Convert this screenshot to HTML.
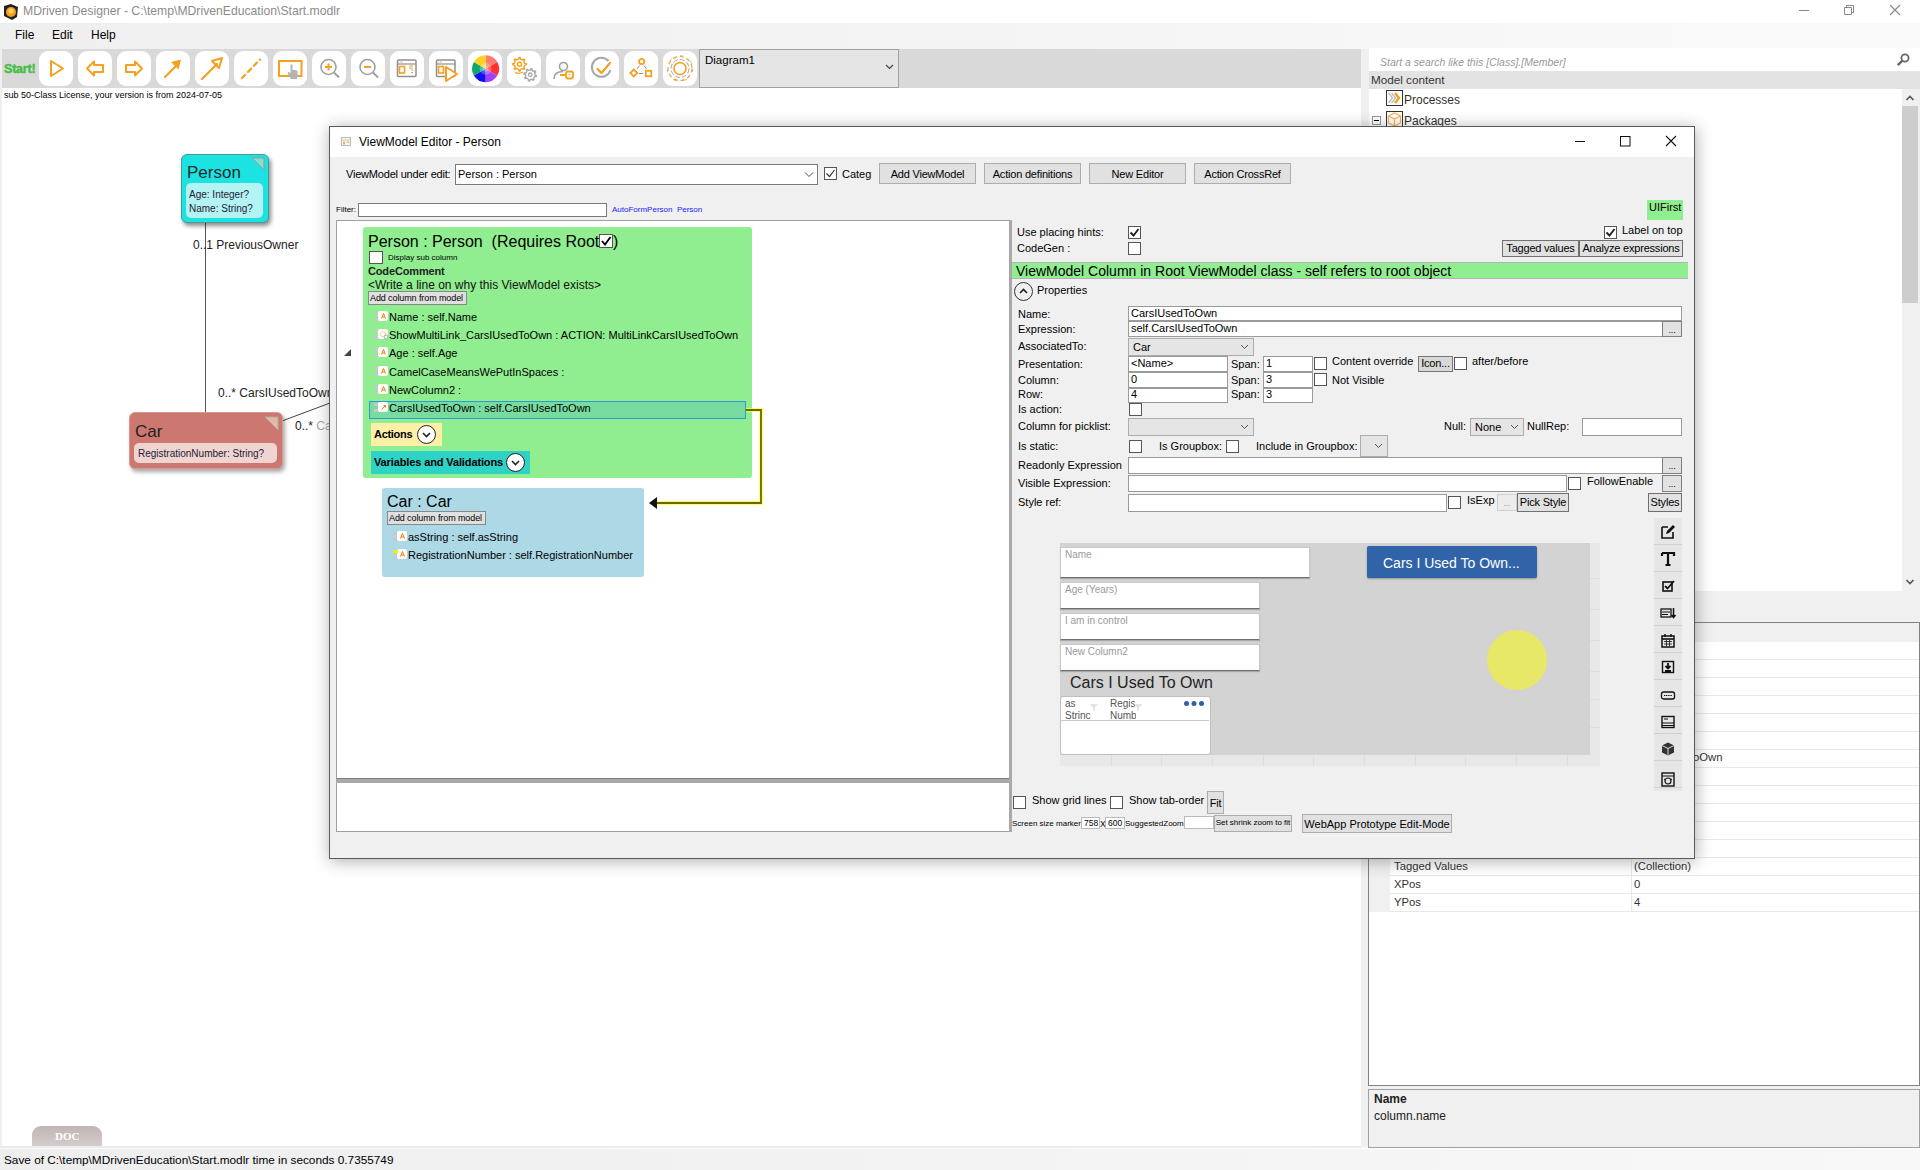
<!DOCTYPE html>
<html><head><meta charset="utf-8">
<style>
*{box-sizing:border-box;margin:0;padding:0}
html,body{width:1920px;height:1170px;overflow:hidden;background:#fff;font-family:"Liberation Sans",sans-serif;color:#000}
.a{position:absolute}
.t{position:absolute;white-space:pre;line-height:1}
.btn{position:absolute;background:#e1e1e1;border:1px solid #adadad;font-size:11px;text-align:center;white-space:pre;line-height:18px;letter-spacing:-.2px;padding-top:1px}
.cb{position:absolute;width:13px;height:13px;border:1px solid #555;background:#fff}
.inp{position:absolute;background:#fff;border:1px solid #9a9a9a;font-size:11px;white-space:pre;line-height:13px;padding-left:2px}
.tb{position:absolute;top:51px;width:34px;height:35px;background:#fff;border-radius:9px}
.tb svg{position:absolute;left:0;top:0}
.s11{font-size:11px;margin-top:1px}
.ico{position:absolute;width:10px;height:10px;background:#fff;border-radius:2px}
.grip{position:absolute;width:5px;height:3px;background:#c8c8c8;border-radius:1px}
</style></head><body>
<div class="a" style="left:0;top:1146px;width:1920px;height:24px;background:linear-gradient(to right,#eeeeee,#f3f3f3 50%,#f8f8f8)"></div>
<div class="a" style="left:0;top:1146px;width:1361px;height:2px;background:#ececec"></div><div class="a" style="left:0;top:1148px;width:1920px;height:1px;background:#fbfbfb"></div>
<!-- title bar -->
<div class="a" style="left:0;top:0;width:1920px;height:23px;background:#fff"></div>
<svg class="a" style="left:2px;top:2px" width="16" height="18" viewBox="0 0 16 18"><path d="M2 4 L9 2 L16 5 L15 15 L10 18 L2 14 Z" fill="#222"/><circle cx="9" cy="10" r="5" fill="#f7a11a"/><circle cx="9" cy="9" r="2.5" fill="#ffd36a"/></svg>
<div class="t" style="left:23px;top:5px;font-size:12.2px;color:#8c8c8c">MDriven Designer - C:\temp\MDrivenEducation\Start.modlr</div>
<svg class="a" style="left:1795px;top:2px" width="120" height="16" viewBox="0 0 120 16"><path d="M4 8.5 H14" stroke="#888" stroke-width="1"/><path d="M49.5 5.5 H56.5 V12.5 H49.5 Z M51.5 5.5 V3.5 H58.5 V10.5 H56.5" stroke="#888" fill="none" stroke-width="1"/><path d="M95 3 L105 13 M105 3 L95 13" stroke="#888" stroke-width="1.1"/></svg>
<!-- menu -->
<div class="a" style="left:0;top:23px;width:1920px;height:26px;background:linear-gradient(to right,#efefef,#f3f3f3 40%,#fafafa)"></div>
<div class="t" style="left:15px;top:29px;font-size:12px">File</div>
<div class="t" style="left:52px;top:29px;font-size:12px">Edit</div>
<div class="t" style="left:91px;top:29px;font-size:12px">Help</div>
<!-- toolbar -->
<div class="a" style="left:0;top:49px;width:2px;height:1097px;background:#f0f0f0"></div><div class="a" style="left:2px;top:49px;width:1359px;height:39px;background:#d9d9d9"></div>
<div class="t" style="left:4px;top:63px;font-size:12.5px;font-weight:700;color:#34c834;letter-spacing:-0.2px;-webkit-text-stroke:.4px #52b052">Start!</div>
<div class="tb" style="left:39px"><svg width="34" height="35"><path d="M12 10 L24 17.5 L12 25 Z" fill="none" stroke="#f5a01e" stroke-width="2" stroke-linejoin="round"/></svg></div>
<div class="tb" style="left:78px"><svg width="34" height="35"><path d="M9 17.5 L16 10.5 V14 H25 V21 H16 V24.5 Z" fill="none" stroke="#f5a01e" stroke-width="2" stroke-linejoin="round"/></svg></div>
<div class="tb" style="left:117px"><svg width="34" height="35"><path d="M25 17.5 L18 10.5 V14 H9 V21 H18 V24.5 Z" fill="none" stroke="#f5a01e" stroke-width="2" stroke-linejoin="round"/></svg></div>
<div class="tb" style="left:156px"><svg width="34" height="35"><path d="M9 26 L23 12" stroke="#f5a01e" stroke-width="2.2" stroke-linecap="round"/><path d="M25 8.5 L15 11 L22.5 18.5 Z" fill="#f5a01e"/></svg></div>
<div class="tb" style="left:195px"><svg width="34" height="35"><path d="M7 28 L22 13" stroke="#f5a01e" stroke-width="2.2" stroke-linecap="round"/><path d="M27 7 L17 10 L24 17 Z" fill="none" stroke="#f5a01e" stroke-width="2" stroke-linejoin="round"/></svg></div>
<div class="tb" style="left:234px"><svg width="34" height="35"><path d="M8 27 L26 8.5" stroke="#f5a01e" stroke-width="2.2" stroke-linecap="round" stroke-dasharray="4.5 4"/></svg></div>
<div class="tb" style="left:273px"><svg width="34" height="35"><path d="M6 10 H28.5 V25 H6 Z" fill="none" stroke="#f5a01e" stroke-width="2"/><path d="M17.5 14 V22 L15.5 21 Q14 21 15 23 L18 28 H24 Q25 25 24.5 20 Q24 19 22 19 H19.5 V14 Q18.5 12.5 17.5 14 Z" fill="#b4b4b4"/></svg></div>
<div class="tb" style="left:312px"><svg width="34" height="35"><circle cx="16.5" cy="16" r="7.5" fill="none" stroke="#a0a0a0" stroke-width="1.6"/><path d="M22 21.5 L27 26.5" stroke="#a0a0a0" stroke-width="2"/><path d="M13 16 H20 M16.5 12.5 V19.5" stroke="#f5a01e" stroke-width="2"/></svg></div>
<div class="tb" style="left:351px"><svg width="34" height="35"><circle cx="16.5" cy="16" r="7.5" fill="none" stroke="#a0a0a0" stroke-width="1.6"/><path d="M22 21.5 L27 26.5" stroke="#a0a0a0" stroke-width="2"/><path d="M13 16 H20" stroke="#f5a01e" stroke-width="2"/></svg></div>
<div class="tb" style="left:390px"><svg width="34" height="35"><rect x="7.5" y="9" width="18.5" height="16.5" rx="1" fill="none" stroke="#909090" stroke-width="1.5"/><path d="M7.5 13 H26" stroke="#909090" stroke-width="1.2"/><path d="M9.5 11 H13" stroke="#f5a01e" stroke-width="1.2" stroke-dasharray="1 .6"/><rect x="9.5" y="15.5" width="5" height="6.5" fill="none" stroke="#f5a01e" stroke-width="1.6"/><path d="M19 15 H23 M19 17 H23 M21 19 H23 M21 21.5 H23" stroke="#f5a01e" stroke-width="1"/></svg></div>
<div class="tb" style="left:429px"><svg width="34" height="35"><rect x="7.5" y="9" width="18.5" height="16.5" rx="1" fill="none" stroke="#909090" stroke-width="1.5"/><path d="M7.5 13 H26" stroke="#909090" stroke-width="1.2"/><path d="M9.5 11 H13" stroke="#f5a01e" stroke-width="1.2" stroke-dasharray="1 .6"/><rect x="9.5" y="15.5" width="5" height="6.5" fill="none" stroke="#f5a01e" stroke-width="1.6"/><path d="M17 16 L28 23 L17 30 Z" fill="#fff" stroke="#f5a01e" stroke-width="2" stroke-linejoin="round"/></svg></div>
<div class="tb" style="left:468px"><svg width="34" height="35">
<g transform="translate(17.6,17.7)">
<path d="M0 0 L0 -13.5 A13.5 13.5 0 0 1 11.7 -6.75 Z" fill="#ff7b6b"/>
<path d="M0 0 L11.7 -6.75 A13.5 13.5 0 0 1 11.7 6.75 Z" fill="#ff3030"/>
<path d="M0 0 L11.7 6.75 A13.5 13.5 0 0 1 0 13.5 Z" fill="#a040ff"/>
<path d="M0 0 L0 13.5 A13.5 13.5 0 0 1 -11.7 6.75 Z" fill="#1010f0"/>
<path d="M0 0 L-11.7 6.75 A13.5 13.5 0 0 1 -11.7 -6.75 Z" fill="#10a870"/>
<path d="M0 0 L-11.7 -6.75 A13.5 13.5 0 0 1 0 -13.5 Z" fill="#ffd020"/>
<circle r="6" fill="#fff" fill-opacity=".25"/><circle r="3" fill="#fff" fill-opacity=".25"/>
</g></svg></div>
<div class="tb" style="left:507px"><svg width="34" height="35"><path d="M17.62 12.29 L19.27 12.53 L19.27 13.87 L17.62 14.11 L16.77 16.17 L17.76 17.51 L16.81 18.46 L15.47 17.47 L13.41 18.32 L13.17 19.97 L11.83 19.97 L11.59 18.32 L9.53 17.47 L8.19 18.46 L7.24 17.51 L8.23 16.17 L7.38 14.11 L5.73 13.87 L5.73 12.53 L7.38 12.29 L8.23 10.23 L7.24 8.89 L8.19 7.94 L9.53 8.93 L11.59 8.08 L11.83 6.43 L13.17 6.43 L13.41 8.08 L15.47 8.93 L16.81 7.94 L17.76 8.89 L16.77 10.23 Z" fill="none" stroke="#f5a01e" stroke-width="1.4" stroke-linejoin="round"/><circle cx="12.5" cy="13.2" r="2" fill="none" stroke="#f5a01e" stroke-width="1.4"/><path d="M8 21.5 Q12 23.5 16 21" stroke="#f5a01e" stroke-width="1.2" fill="none"/><path d="M28.00 23.91 L29.37 24.43 L29.13 25.62 L27.66 25.57 L26.51 27.27 L27.12 28.61 L26.10 29.28 L25.11 28.20 L23.09 28.60 L22.57 29.97 L21.38 29.73 L21.43 28.26 L19.73 27.11 L18.39 27.72 L17.72 26.70 L18.80 25.71 L18.40 23.69 L17.03 23.17 L17.27 21.98 L18.74 22.03 L19.89 20.33 L19.28 18.99 L20.30 18.32 L21.29 19.40 L23.31 19.00 L23.83 17.63 L25.02 17.87 L24.97 19.34 L26.67 20.49 L28.01 19.88 L28.68 20.90 L27.60 21.89 Z" fill="#fff" stroke="#a8a8a8" stroke-width="1.4" stroke-linejoin="round"/><circle cx="23.2" cy="23.8" r="1.8" fill="none" stroke="#a8a8a8" stroke-width="1.3"/></svg></div>
<div class="tb" style="left:546px"><svg width="34" height="35"><circle cx="17.5" cy="15.5" r="4" fill="none" stroke="#a0a0a0" stroke-width="1.6"/><path d="M8 28 Q8 20.5 17 20.5" fill="none" stroke="#a0a0a0" stroke-width="1.6"/><path d="M14 24 H20" stroke="#f5a01e" stroke-width="2"/><rect x="20" y="20.5" width="7" height="7" rx="2" fill="none" stroke="#f5a01e" stroke-width="1.8"/><circle cx="23.5" cy="23.5" r=".8" fill="#f5a01e"/></svg></div>
<div class="tb" style="left:585px"><svg width="34" height="35"><path d="M23.5 10 A9.5 9.5 0 1 0 25.5 19" fill="none" stroke="#a8a8a8" stroke-width="2"/><path d="M12.5 18 L16.5 22 L25 12" fill="none" stroke="#f5a01e" stroke-width="2.2" stroke-linecap="round" stroke-linejoin="round"/></svg></div>
<div class="tb" style="left:624px"><svg width="34" height="35"><circle cx="17.7" cy="10.5" r="2.6" fill="none" stroke="#f5a01e" stroke-width="1.8"/><path d="M9.8 18.5 L13.3 22 L9.8 25.5 L6.3 22 Z" fill="none" stroke="#f5a01e" stroke-width="1.8"/><rect x="21.8" y="19.8" width="5.5" height="5.5" fill="none" stroke="#f5a01e" stroke-width="1.8"/><path d="M15.5 14.5 L13 18 M20 14.5 L22.5 18 M15 22.5 H19" stroke="#909090" stroke-width="1"/></svg></div>
<div class="tb" style="left:663px"><svg width="34" height="35"><circle cx="17" cy="17.5" r="6" fill="none" stroke="#f5a01e" stroke-width="1.6"/><circle cx="17" cy="17.5" r="9" fill="none" stroke="#a8a8a8" stroke-width="1" stroke-dasharray="5 2"/><circle cx="17" cy="17.5" r="12" fill="none" stroke="#f5a01e" stroke-width="1.2" stroke-dasharray="4 3"/><circle cx="17" cy="17.5" r="12.8" fill="none" stroke="#a8a8a8" stroke-width=".8" stroke-dasharray="3 9"/></svg></div>
<div class="a" style="left:699px;top:49px;width:200px;height:39px;background:#e5e5e5;border:1px solid #a0a0a0"></div>
<div class="t" style="left:705px;top:55px;font-size:11.5px">Diagram1</div>
<svg class="a" style="left:885px;top:64px" width="9" height="6"><path d="M1 1 L4.5 4.5 L8 1" fill="none" stroke="#444" stroke-width="1.2"/></svg>
<div class="t" style="left:4px;top:91px;font-size:9px">sub 50-Class License, your version is from 2024-07-05</div>
<!-- right panel -->
<div class="a" style="left:1361px;top:49px;width:559px;height:1097px;background:#f0f0f0"></div>
<div class="a" style="left:1369px;top:48px;width:551px;height:23px;background:#fff"></div>
<div class="t" style="left:1380px;top:57px;font-size:10.5px;font-style:italic;color:#999">Start a search like this [Class].[Member]</div>
<svg class="a" style="left:1896px;top:52px" width="16" height="16"><circle cx="9" cy="6" r="3.6" fill="none" stroke="#666" stroke-width="1.8"/><path d="M6.5 8.5 L1.8 13.2" stroke="#666" stroke-width="2.4"/></svg>
<div class="a" style="left:1369px;top:71px;width:551px;height:18px;background:#e3e3e3"></div>
<div class="t" style="left:1371px;top:74px;font-size:11.7px;color:#333">Model content</div>
<div class="a" style="left:1369px;top:89px;width:533px;height:502px;background:#fff"></div>
<div class="a" style="left:1902px;top:89px;width:16px;height:502px;background:#f0f0f0"></div>
<div class="a" style="left:1902px;top:106px;width:16px;height:197px;background:#cdcdcd"></div>
<svg class="a" style="left:1902px;top:92px" width="16" height="12"><path d="M4.5 8 L8 4.5 L11.5 8" fill="none" stroke="#555" stroke-width="1.6"/></svg>
<svg class="a" style="left:1902px;top:576px" width="16" height="12"><path d="M4.5 4 L8 7.5 L11.5 4" fill="none" stroke="#555" stroke-width="1.6"/></svg>
<!-- tree items -->
<svg class="a" style="left:1386px;top:90px" width="17" height="17"><rect x=".5" y=".5" width="16" height="15" fill="#fff" stroke="#333"/><path d="M2.5 3 L6.5 8 L2.5 13 M5.5 3 L9.5 8 L5.5 13" fill="none" stroke="#bbb" stroke-width="1.3"/><path d="M9 3 L13 8 L9 13" fill="none" stroke="#f5a01e" stroke-width="2.4"/></svg>
<div class="t" style="left:1404px;top:94px;font-size:12px;color:#333">Processes</div>
<div class="a" style="left:1372px;top:116px;width:9px;height:9px;border:1px solid #999;background:#fff"></div>
<div class="a" style="left:1374px;top:120px;width:5px;height:1px;background:#000"></div>
<svg class="a" style="left:1386px;top:111px" width="17" height="16"><rect x=".5" y=".5" width="16" height="16" fill="#fff" stroke="#333"/><path d="M2.5 5 L8.5 2 L14.5 5 V12 L8.5 15 L2.5 12 Z M2.5 5 L8.5 8 L14.5 5 M8.5 8 V15" fill="none" stroke="#f5b050" stroke-width="1.2"/></svg>
<div class="t" style="left:1404px;top:115px;font-size:12px;color:#333">Packages</div>
<!-- property grid -->
<div class="a" style="left:1368px;top:622px;width:552px;height:464px;background:#fff;border:1px solid #828282"></div>
<div class="a" style="left:1369px;top:623px;width:550px;height:19px;background:#f0f0f0"></div>
<div class="a" style="left:1369px;top:642px;width:21px;height:270px;background:#f0f0f0"></div>
<div class="a" style="left:1390px;top:659px;width:529px;height:1px;background:#e8e8e8"></div>
<div class="a" style="left:1390px;top:677px;width:529px;height:1px;background:#e8e8e8"></div>
<div class="a" style="left:1390px;top:695px;width:529px;height:1px;background:#e8e8e8"></div>
<div class="a" style="left:1390px;top:713px;width:529px;height:1px;background:#e8e8e8"></div>
<div class="a" style="left:1390px;top:731px;width:529px;height:1px;background:#e8e8e8"></div>
<div class="a" style="left:1390px;top:749px;width:529px;height:1px;background:#e8e8e8"></div>
<div class="a" style="left:1390px;top:767px;width:529px;height:1px;background:#e8e8e8"></div>
<div class="a" style="left:1390px;top:785px;width:529px;height:1px;background:#e8e8e8"></div>
<div class="a" style="left:1390px;top:803px;width:529px;height:1px;background:#e8e8e8"></div>
<div class="a" style="left:1390px;top:821px;width:529px;height:1px;background:#e8e8e8"></div>
<div class="a" style="left:1390px;top:839px;width:529px;height:1px;background:#e8e8e8"></div>
<div class="a" style="left:1390px;top:857px;width:529px;height:1px;background:#e8e8e8"></div>
<div class="a" style="left:1390px;top:875px;width:529px;height:1px;background:#e8e8e8"></div>
<div class="a" style="left:1390px;top:893px;width:529px;height:1px;background:#e8e8e8"></div>
<div class="a" style="left:1390px;top:911px;width:529px;height:1px;background:#e8e8e8"></div>
<div class="a" style="left:1631px;top:642px;width:1px;height:269px;background:#e8e8e8"></div>
<div class="t" style="left:1634px;top:752px;font-size:11.3px;color:#333">CarsIUsedToOwn</div>
<div class="t" style="left:1394px;top:861px;font-size:11.3px;color:#333">Tagged Values</div>
<div class="t" style="left:1634px;top:861px;font-size:11.3px;color:#333">(Collection)</div>
<div class="t" style="left:1394px;top:879px;font-size:11.3px;color:#333">XPos</div>
<div class="t" style="left:1634px;top:879px;font-size:11.3px;color:#333">0</div>
<div class="t" style="left:1394px;top:897px;font-size:11.3px;color:#333">YPos</div>
<div class="t" style="left:1634px;top:897px;font-size:11.3px;color:#333">4</div>
<div class="a" style="left:1368px;top:1089px;width:552px;height:59px;background:#f0f0f0;border:1px solid #a0a0a0"></div>
<div class="t" style="left:1374px;top:1093px;font-size:12px;font-weight:700;color:#222">Name</div>
<div class="t" style="left:1374px;top:1110px;font-size:12px;color:#222">column.name</div>
<!-- status -->

<div class="t" style="left:4px;top:1155px;font-size:11.8px">Save of C:\temp\MDrivenEducation\Start.modlr time in seconds 0.7355749</div>
<div class="a" style="left:32px;top:1126px;width:70px;height:20px;border-radius:9px 9px 0 0;background:linear-gradient(#c2b5b5,#d4cccc)"></div>
<div class="t" style="left:55px;top:1131px;font-size:11px;font-weight:700;color:#fff;font-family:'Liberation Serif',serif">DOC</div>
<!-- diagram -->
<div class="a" style="left:205px;top:222px;width:1px;height:190px;background:#555"></div>
<svg class="a" style="left:280px;top:400px" width="52" height="25"><path d="M2 21 L50 3" stroke="#444" stroke-width="1"/></svg>
<div class="t" style="left:193px;top:239px;font-size:12px;color:#222">0..1 PreviousOwner</div>
<div class="t" style="left:218px;top:387px;font-size:12px;color:#222">0..* CarsIUsedToOwn</div>
<div class="t" style="left:295px;top:420px;font-size:12px;color:#222">0..* <span style="color:#aaa">Ca</span></div>
<div class="a" style="left:181px;top:154px;width:88px;height:69px;background:#1de2e2;border:1.5px solid #4a9a9a;border-radius:6px;box-shadow:2px 3px 4px rgba(0,0,0,.45)"></div>
<svg class="a" style="left:251px;top:157px" width="14" height="14"><path d="M1 1 H13 V13 Z" fill="#7fe0d0" stroke="#999" stroke-width="1"/></svg>
<div class="t" style="left:187px;top:164px;font-size:17px;color:#1a2a2a">Person</div>
<div class="a" style="left:186px;top:183px;width:77px;height:35px;background:#b4f3f3;border-radius:5px"></div>
<div class="t" style="left:189px;top:190px;font-size:10px;color:#223">Age: Integer?</div>
<div class="t" style="left:189px;top:204px;font-size:10px;color:#223">Name: String?</div>
<div class="a" style="left:129px;top:412px;width:154px;height:57px;background:#cc7870;border:1px solid #d89890;border-radius:6px;box-shadow:2px 3px 4px rgba(0,0,0,.35)"></div>
<svg class="a" style="left:264px;top:416px" width="15" height="15"><path d="M1 1 H14 V14 Z" fill="#e8b8a0" stroke="#aaa" stroke-width="1"/></svg>
<div class="t" style="left:135px;top:423px;font-size:17px;color:#222">Car</div>
<div class="a" style="left:134px;top:443px;width:143px;height:20px;background:#f0d4d2;border-radius:5px"></div>
<div class="t" style="left:138px;top:449px;font-size:10px;color:#223">RegistrationNumber: String?</div>
<!-- dialog -->
<div class="a" style="left:329px;top:126px;width:1366px;height:733px;background:#f0f0f0;border:1px solid #5a5a5a;box-shadow:1px 2px 16px rgba(0,0,0,0.32)"></div>
<div class="a" style="left:330px;top:127px;width:1364px;height:30px;background:#fff"></div>
<svg class="a" style="left:341px;top:137px" width="10" height="9"><rect x=".5" y=".5" width="9" height="8" fill="#f4f4f4" stroke="#bbb"/><path d="M1 3 H9" stroke="#ccc"/><rect x="2" y="4.5" width="2" height="3" fill="#f5b050"/><rect x="5.5" y="4.5" width="3" height="1.5" fill="#f5c070"/></svg>
<div class="t" style="left:359px;top:136px;font-size:12px">ViewModel Editor - Person</div>
<svg class="a" style="left:1570px;top:132px" width="112" height="18"><path d="M5 9.5 H15" stroke="#111" stroke-width="1"/><rect x="50.5" y="4.5" width="9.5" height="9.5" fill="none" stroke="#111" stroke-width="1"/><path d="M96 4 L106 14 M106 4 L96 14" stroke="#111" stroke-width="1.1"/></svg>
<div class="t s11" style="left:346px;top:168px;letter-spacing:-.2px">ViewModel under edit:</div>
<div class="a" style="left:455px;top:164px;width:363px;height:21px;background:#fff;border:1px solid #7a7a7a"></div>
<div class="t s11" style="left:458px;top:168px">Person : Person</div>
<svg class="a" style="left:804px;top:171px" width="10" height="7"><path d="M1 1.5 L5 5.5 L9 1.5" fill="none" stroke="#444" stroke-width="1"/></svg>
<div class="cb" style="left:824px;top:167px"></div>
<svg class="a" style="left:824px;top:167px" width="13" height="13"><path d="M2.5 6.5 L5.5 9.5 L10.5 3" fill="none" stroke="#333" stroke-width="1.2"/></svg>
<div class="t s11" style="left:842px;top:168px">Categ</div>
<div class="btn" style="left:879px;top:163px;width:97px;height:21px;line-height:19px">Add ViewModel</div>
<div class="btn" style="left:984px;top:163px;width:97px;height:21px;line-height:19px">Action definitions</div>
<div class="btn" style="left:1089px;top:163px;width:97px;height:21px;line-height:19px">New Editor</div>
<div class="btn" style="left:1194px;top:163px;width:97px;height:21px;line-height:19px">Action CrossRef</div>
<div class="t" style="left:336px;top:206px;font-size:8px">Filter:</div>
<div class="a" style="left:358px;top:203px;width:249px;height:14px;background:#fff;border:1px solid #7a7a7a"></div>
<div class="t" style="left:612px;top:206px;font-size:8px;color:#1a1aff">AutoFormPerson  Person</div>
<div class="a" style="left:1647px;top:200px;width:36px;height:20px;background:#90ee90"></div>
<div class="t s11" style="left:1649px;top:201px">UIFirst</div>
<!-- tree panel -->
<div class="a" style="left:336px;top:220px;width:673px;height:559px;background:#fff;border-left:1px solid #a0a0a0;border-top:1px solid #a0a0a0;border-bottom:1px solid #7a8088"></div>
<div class="a" style="left:336px;top:779px;width:673px;height:4px;background:#a9a9a9"></div>
<div class="a" style="left:1009px;top:220px;width:3px;height:612px;background:#a9a9a9"></div>
<div class="a" style="left:336px;top:783px;width:673px;height:49px;background:#fff;border-left:1px solid #a0a0a0;border-bottom:1px solid #a0a0a0"></div>
<svg class="a" style="left:343px;top:348px" width="9" height="9"><path d="M8 1 V8 H1 Z" fill="#444"/></svg>
<!-- green VM box -->
<div class="a" style="left:363px;top:227px;width:389px;height:251px;background:#90ee90;border-radius:3px"></div>
<div class="t" style="left:368px;top:234px;font-size:16px">Person : Person  (Requires Root</div>
<div class="a" style="left:599px;top:234px;width:14px;height:14px;background:#fff;border:1px solid #555"></div>
<svg class="a" style="left:599px;top:234px" width="14" height="14"><path d="M3 7 L6 10.5 L11.5 3" fill="none" stroke="#000" stroke-width="1.8"/></svg>
<div class="t" style="left:613px;top:234px;font-size:16px">)</div>
<div class="a" style="left:369px;top:251px;width:14px;height:13px;background:#fff;border:1px solid #555"></div>
<div class="t" style="left:388px;top:254px;font-size:8px">Display sub column</div>
<div class="t" style="left:368px;top:266px;font-size:11px;font-weight:700;color:#222;letter-spacing:-.15px">CodeComment</div>
<div class="t" style="left:368px;top:279px;font-size:12px;color:#111">&lt;Write a line on why this ViewModel exists&gt;</div>
<div class="a" style="left:368px;top:291px;width:99px;height:14px;background:#e0e0e0;border:1px solid #888"></div>
<div class="t" style="left:370px;top:294px;font-size:9px;letter-spacing:-.1px">Add column from model</div>
<div class="a" style="left:369px;top:401px;width:377px;height:18px;background:#78dca0;border:1px solid #2a9ad8"></div>
<div class="grip" style="left:374px;top:312px"></div><div class="grip" style="left:374px;top:318px"></div>
<div class="ico" style="left:378px;top:311px"></div>
<svg class="a" style="left:379px;top:312px" width="9" height="9"><path d="M2.5 6.5 L4.5 1.5 L6.5 6.5 M3.2 5 H5.8" fill="none" stroke="#f08000" stroke-width="1"/></svg>
<div class="t s11" style="left:389px;top:311px">Name : self.Name</div>
<div class="grip" style="left:374px;top:330px"></div><div class="grip" style="left:374px;top:336px"></div>
<div class="ico" style="left:378px;top:329px"></div>
<svg class="a" style="left:379px;top:330px" width="10" height="10"><circle cx="4" cy="4" r="2.5" fill="none" stroke="#f5a040" stroke-width="1" stroke-dasharray="1 .8"/><circle cx="7" cy="7" r="2" fill="none" stroke="#aaa" stroke-width="1"/></svg>
<div class="t s11" style="left:389px;top:329px">ShowMultiLink_CarsIUsedToOwn : ACTION: MultiLinkCarsIUsedToOwn</div>
<div class="grip" style="left:374px;top:348px"></div><div class="grip" style="left:374px;top:354px"></div>
<div class="ico" style="left:378px;top:347px"></div>
<svg class="a" style="left:379px;top:348px" width="9" height="9"><path d="M2.5 6.5 L4.5 1.5 L6.5 6.5 M3.2 5 H5.8" fill="none" stroke="#f08000" stroke-width="1"/></svg>
<div class="t s11" style="left:389px;top:347px">Age : self.Age</div>
<div class="grip" style="left:374px;top:367px"></div><div class="grip" style="left:374px;top:373px"></div>
<div class="ico" style="left:378px;top:366px"></div>
<svg class="a" style="left:379px;top:367px" width="9" height="9"><path d="M2.5 6.5 L4.5 1.5 L6.5 6.5 M3.2 5 H5.8" fill="none" stroke="#f08000" stroke-width="1"/></svg>
<div class="t s11" style="left:389px;top:366px">CamelCaseMeansWePutInSpaces :</div>
<div class="grip" style="left:374px;top:385px"></div><div class="grip" style="left:374px;top:391px"></div>
<div class="ico" style="left:378px;top:384px"></div>
<svg class="a" style="left:379px;top:385px" width="9" height="9"><path d="M2.5 6.5 L4.5 1.5 L6.5 6.5 M3.2 5 H5.8" fill="none" stroke="#f08000" stroke-width="1"/></svg>
<div class="t s11" style="left:389px;top:384px">NewColumn2 :</div>
<div class="grip" style="left:374px;top:403px"></div><div class="grip" style="left:374px;top:409px"></div>
<div class="ico" style="left:378px;top:402px"></div>
<svg class="a" style="left:379px;top:403px" width="9" height="9"><path d="M2.5 6.5 L6.5 2.5 M4.5 2.5 H6.5 V4.5" fill="none" stroke="#f08000" stroke-width="1"/></svg>
<div class="t s11" style="left:389px;top:402px">CarsIUsedToOwn : self.CarsIUsedToOwn</div>
<div class="a" style="left:371px;top:423px;width:71px;height:23px;background:#fdf0a6"></div>
<div class="t" style="left:374px;top:429px;font-size:11px;font-weight:700;letter-spacing:-.3px">Actions</div>
<div class="a" style="left:417px;top:425px;width:19px;height:19px;border-radius:50%;background:#fff;border:1px solid #222"></div>
<svg class="a" style="left:417px;top:425px" width="19" height="19"><path d="M6 8 L9.5 11.5 L13 8" fill="none" stroke="#222" stroke-width="1.6"/></svg>
<div class="a" style="left:371px;top:451px;width:159px;height:23px;background:#2ed3c6"></div>
<div class="t" style="left:374px;top:457px;font-size:11px;font-weight:700;letter-spacing:-.12px">Variables and Validations</div>
<div class="a" style="left:506px;top:453px;width:19px;height:19px;border-radius:50%;background:#fff;border:1px solid #222"></div>
<svg class="a" style="left:506px;top:453px" width="19" height="19"><path d="M6 8 L9.5 11.5 L13 8" fill="none" stroke="#222" stroke-width="1.6"/></svg>
<!-- connector -->
<svg class="a" style="left:640px;top:400px" width="130" height="115"><path d="M106 10 H121 V103 H12" fill="none" stroke="#ffff30" stroke-width="3.4"/><path d="M106 10 H121 V103 H12" fill="none" stroke="#6a6a00" stroke-width="1.8"/><path d="M9 103 L17 97 V109 Z" fill="#111"/></svg>
<!-- car VM box -->
<div class="a" style="left:382px;top:488px;width:262px;height:89px;background:#add8e6;border-radius:3px"></div>
<div class="t" style="left:387px;top:494px;font-size:16px">Car : Car</div>
<div class="a" style="left:387px;top:511px;width:99px;height:14px;background:#e0e0e0;border:1px solid #888"></div>
<div class="t" style="left:389px;top:514px;font-size:9px;letter-spacing:-.1px">Add column from model</div>
<div class="grip" style="left:393px;top:532px"></div><div class="grip" style="left:393px;top:538px"></div>
<div class="ico" style="left:397px;top:531px"></div>
<svg class="a" style="left:398px;top:532px" width="9" height="9"><path d="M2.5 6.5 L4.5 1.5 L6.5 6.5 M3.2 5 H5.8" fill="none" stroke="#f08000" stroke-width="1"/></svg>
<div class="t s11" style="left:408px;top:531px">asString : self.asString</div>
<div class="grip" style="left:393px;top:550px"></div><div class="grip" style="left:393px;top:556px"></div>
<div class="ico" style="left:397px;top:549px"></div>
<svg class="a" style="left:398px;top:550px" width="9" height="9"><path d="M2.5 6.5 L4.5 1.5 L6.5 6.5 M3.2 5 H5.8" fill="none" stroke="#f08000" stroke-width="1"/></svg>
<div class="t s11" style="left:408px;top:549px">RegistrationNumber : self.RegistrationNumber</div>
<div class="a" style="left:393px;top:550px;width:5px;height:3px;background:#f0f000"></div>
<div class="cb" style="left:1604px;top:226px"></div>
<svg class="a" style="left:1604px;top:226px" width="13" height="13"><path d="M2.5 6.5 L5.5 9.5 L10.5 3" fill="none" stroke="#222" stroke-width="1.9"/></svg>
<div class="t s11" style="left:1622px;top:224px;">Label on top</div>
<div class="btn" style="left:1502px;top:240px;width:77px;height:17px;line-height:15px;font-size:11px;padding-top:0;border-color:#707070">Tagged values</div>
<div class="btn" style="left:1579px;top:240px;width:104px;height:17px;line-height:15px;font-size:11px;padding-top:0;border-color:#707070">Analyze expressions</div>
<div class="t s11" style="left:1017px;top:226px;">Use placing hints:</div>
<div class="cb" style="left:1128px;top:226px"></div>
<svg class="a" style="left:1128px;top:226px" width="13" height="13"><path d="M2.5 6.5 L5.5 9.5 L10.5 3" fill="none" stroke="#222" stroke-width="1.9"/></svg>
<div class="t s11" style="left:1017px;top:242px;">CodeGen :</div>
<div class="cb" style="left:1128px;top:242px"></div>
<div class="a" style="left:1012px;top:262px;width:676px;height:17px;background:#90ee90;border-top:1px solid #b8b0b8;border-bottom:1px solid #b8b0b8"></div>
<div class="t" style="left:1016px;top:264px;font-size:14px">ViewModel Column in Root ViewModel class - self refers to root object</div>
<div class="a" style="left:1014px;top:282px;width:19px;height:19px;border-radius:50%;border:1px solid #333;background:#f0f0f0"></div>
<svg class="a" style="left:1014px;top:282px" width="19" height="19"><path d="M6 11 L9.5 7.5 L13 11" fill="none" stroke="#222" stroke-width="1.6"/></svg>
<div class="t" style="left:1037px;top:285px;font-size:11px">Properties</div>
<div class="t s11" style="left:1018px;top:308px;">Name:</div>
<div class="inp" style="left:1128px;top:306px;width:554px;height:15px;line-height:13px">CarsIUsedToOwn</div>
<div class="t s11" style="left:1018px;top:323px;">Expression:</div>
<div class="inp" style="left:1128px;top:321px;width:535px;height:16px;line-height:12px">self.CarsIUsedToOwn</div>
<div class="btn" style="border-color:#808080;left:1662px;top:321px;width:20px;height:16px;line-height:14px;font-size:9px">...</div>
<div class="t s11" style="left:1018px;top:340px;">AssociatedTo:</div>
<div class="a" style="left:1128px;top:338px;width:126px;height:18px;background:#e5e5e5;border:1px solid #acacac"></div>
<div class="t s11" style="left:1133px;top:341px;">Car</div>
<svg class="a" style="left:1240px;top:344px" width="9" height="6"><path d="M1 1 L4.5 4.5 L8 1" fill="none" stroke="#555" stroke-width="1"/></svg>
<div class="t s11" style="left:1018px;top:358px;">Presentation:</div>
<div class="inp" style="left:1128px;top:356px;width:100px;height:16px;line-height:12px">&lt;Name&gt;</div>
<div class="t s11" style="left:1231px;top:358px;">Span:</div>
<div class="inp" style="left:1263px;top:356px;width:50px;height:16px;line-height:12px">1</div>
<div class="cb" style="left:1314px;top:357px"></div>
<div class="t s11" style="left:1332px;top:355px;">Content override</div>
<div class="btn" style="left:1418px;top:356px;width:35px;height:16px;line-height:13px;font-size:11px;background:#d8d8d8;border-color:#777;padding-top:0">Icon...</div>
<div class="cb" style="left:1454px;top:357px"></div>
<div class="t s11" style="left:1472px;top:355px;">after/before</div>
<div class="t s11" style="left:1018px;top:374px;">Column:</div>
<div class="inp" style="left:1128px;top:372px;width:100px;height:16px;line-height:12px">0</div>
<div class="t s11" style="left:1231px;top:374px;">Span:</div>
<div class="inp" style="left:1263px;top:372px;width:50px;height:16px;line-height:12px">3</div>
<div class="cb" style="left:1314px;top:373px"></div>
<div class="t s11" style="left:1332px;top:374px;">Not Visible</div>
<div class="t s11" style="left:1018px;top:388px;">Row:</div>
<div class="inp" style="left:1128px;top:388px;width:100px;height:15px;line-height:11px">4</div>
<div class="t s11" style="left:1231px;top:388px;">Span:</div>
<div class="inp" style="left:1263px;top:388px;width:50px;height:15px;line-height:11px">3</div>
<div class="t s11" style="left:1018px;top:403px;">Is action:</div>
<div class="cb" style="left:1129px;top:403px"></div>
<div class="t s11" style="left:1018px;top:420px;">Column for picklist:</div>
<div class="a" style="left:1128px;top:418px;width:126px;height:18px;background:#e5e5e5;border:1px solid #acacac"></div>
<svg class="a" style="left:1240px;top:424px" width="9" height="6"><path d="M1 1 L4.5 4.5 L8 1" fill="none" stroke="#555" stroke-width="1"/></svg>
<div class="t s11" style="left:1444px;top:420px;">Null:</div>
<div class="a" style="left:1470px;top:418px;width:54px;height:18px;background:#e5e5e5;border:1px solid #acacac"></div>
<div class="t s11" style="left:1475px;top:421px;">None</div>
<svg class="a" style="left:1510px;top:424px" width="9" height="6"><path d="M1 1 L4.5 4.5 L8 1" fill="none" stroke="#555" stroke-width="1"/></svg>
<div class="t s11" style="left:1527px;top:420px;">NullRep:</div>
<div class="inp" style="left:1582px;top:418px;width:100px;height:18px;line-height:14px"></div>
<div class="t s11" style="left:1018px;top:440px;">Is static:</div>
<div class="cb" style="left:1129px;top:440px"></div>
<div class="t s11" style="left:1159px;top:440px;">Is Groupbox:</div>
<div class="cb" style="left:1226px;top:440px"></div>
<div class="t s11" style="left:1256px;top:440px;">Include in Groupbox:</div>
<div class="a" style="left:1360px;top:435px;width:28px;height:22px;background:#e5e5e5;border:1px solid #acacac"></div>
<svg class="a" style="left:1374px;top:443px" width="9" height="6"><path d="M1 1 L4.5 4.5 L8 1" fill="none" stroke="#555" stroke-width="1"/></svg>
<div class="t s11" style="left:1018px;top:459px;">Readonly Expression</div>
<div class="inp" style="left:1128px;top:457px;width:535px;height:17px;line-height:13px"></div>
<div class="btn" style="border-color:#808080;left:1662px;top:457px;width:20px;height:17px;line-height:15px;font-size:9px">...</div>
<div class="t s11" style="left:1018px;top:477px;">Visible Expression:</div>
<div class="inp" style="left:1128px;top:475px;width:439px;height:17px;line-height:13px"></div>
<div class="cb" style="left:1568px;top:477px"></div>
<div class="t s11" style="left:1587px;top:475px;">FollowEnable</div>
<div class="btn" style="border-color:#808080;left:1662px;top:475px;width:20px;height:17px;line-height:15px;font-size:9px">...</div>
<div class="t s11" style="left:1018px;top:496px;">Style ref:</div>
<div class="inp" style="left:1128px;top:494px;width:319px;height:18px;line-height:14px"></div>
<div class="cb" style="left:1448px;top:496px"></div>
<div class="t s11" style="left:1467px;top:494px;">IsExp</div>
<div class="btn" style="left:1497px;top:494px;width:20px;height:17px;line-height:15px;font-size:9px;background:#ececec;border-color:#cfcfcf;color:#999">...</div>
<div class="btn" style="left:1517px;top:493px;width:52px;height:19px;line-height:16px;font-size:11px;border-color:#707070;padding-top:0">Pick Style</div>
<div class="btn" style="left:1648px;top:493px;width:34px;height:19px;line-height:16px;font-size:11px;border-color:#707070;padding-top:0">Styles</div>
<div class="a" style="left:1060px;top:543px;width:540px;height:223px;background:#e8e8e8"></div>
<div class="a" style="left:1060px;top:543px;width:530px;height:212px;background:#d3d3d3"></div>
<div class="a" style="left:1590px;top:578px;width:10px;height:1px;background:#dedede"></div><div class="a" style="left:1590px;top:609px;width:10px;height:1px;background:#dedede"></div><div class="a" style="left:1590px;top:640px;width:10px;height:1px;background:#dedede"></div><div class="a" style="left:1590px;top:671px;width:10px;height:1px;background:#dedede"></div><div class="a" style="left:1590px;top:699px;width:10px;height:1px;background:#dedede"></div><div class="a" style="left:1590px;top:727px;width:10px;height:1px;background:#dedede"></div>
<div class="a" style="left:1111px;top:755px;width:1px;height:11px;background:#dedede"></div><div class="a" style="left:1161px;top:755px;width:1px;height:11px;background:#dedede"></div><div class="a" style="left:1212px;top:755px;width:1px;height:11px;background:#dedede"></div><div class="a" style="left:1263px;top:755px;width:1px;height:11px;background:#dedede"></div><div class="a" style="left:1313px;top:755px;width:1px;height:11px;background:#dedede"></div><div class="a" style="left:1364px;top:755px;width:1px;height:11px;background:#dedede"></div><div class="a" style="left:1415px;top:755px;width:1px;height:11px;background:#dedede"></div><div class="a" style="left:1465px;top:755px;width:1px;height:11px;background:#dedede"></div><div class="a" style="left:1516px;top:755px;width:1px;height:11px;background:#dedede"></div><div class="a" style="left:1567px;top:755px;width:1px;height:11px;background:#dedede"></div>
<div class="a" style="left:1060px;top:547px;width:250px;height:31px;background:#fff;border:1px solid #c8c8c8;border-bottom:1px solid #707070;box-shadow:0 1px 1px rgba(0,0,0,.2)"></div>
<div class="t" style="left:1065px;top:550px;font-size:10px;color:#999">Name</div>
<div class="a" style="left:1060px;top:582px;width:200px;height:27px;background:#fff;border:1px solid #c8c8c8;border-bottom:1px solid #707070;box-shadow:0 1px 1px rgba(0,0,0,.2)"></div>
<div class="t" style="left:1065px;top:585px;font-size:10px;color:#999">Age (Years)</div>
<div class="a" style="left:1060px;top:613px;width:200px;height:27px;background:#fff;border:1px solid #c8c8c8;border-bottom:1px solid #707070;box-shadow:0 1px 1px rgba(0,0,0,.2)"></div>
<div class="t" style="left:1065px;top:616px;font-size:10px;color:#999">I am in control</div>
<div class="a" style="left:1060px;top:644px;width:200px;height:27px;background:#fff;border:1px solid #c8c8c8;border-bottom:1px solid #707070;box-shadow:0 1px 1px rgba(0,0,0,.2)"></div>
<div class="t" style="left:1065px;top:647px;font-size:10px;color:#999">New Column2</div>
<div class="t" style="left:1070px;top:675px;font-size:16px;color:#222">Cars I Used To Own</div>
<div class="a" style="left:1060px;top:696px;width:151px;height:59px;background:#fff;border:1px solid #c0c0c0;border-radius:3px"></div>
<div class="a" style="left:1061px;top:720px;width:148px;height:1px;background:#c8c8c8"></div>
<div class="t" style="left:1065px;top:698px;width:26px;height:24px;overflow:hidden;font-size:10px;color:#555;line-height:12px">as
Strinc</div>
<div class="t" style="left:1110px;top:698px;width:26px;height:24px;overflow:hidden;font-size:10px;color:#555;line-height:12px">Regis
Numb</div>
<svg class="a" style="left:1090px;top:703px" width="60" height="10"><path d="M0 1 H8 L5 4.5 V8 L3 7 V4.5 Z M44 1 H52 L49 4.5 V8 L47 7 V4.5 Z" fill="#e4e4e4"/></svg>
<svg class="a" style="left:1183px;top:700px" width="24" height="8"><circle cx="3.5" cy="3.5" r="2.5" fill="#2f5fa8"/><circle cx="11" cy="3.5" r="2.5" fill="#2f5fa8"/><circle cx="18.5" cy="3.5" r="2.5" fill="#2f5fa8"/></svg>
<div class="a" style="left:1367px;top:546px;width:170px;height:32px;background:#3063a8;border-radius:2px;box-shadow:0 1px 2px rgba(0,0,0,.3)"></div>
<div class="t" style="left:1383px;top:556px;font-size:14px;color:#fff">Cars I Used To Own...</div>
<div class="a" style="left:1487px;top:630px;width:60px;height:60px;border-radius:50%;background:#e8e868"></div>
<div class="a" style="left:1654px;top:518px;width:28px;height:273px;background:#e6e6e6"></div>
<div class="a" style="left:1654px;top:544px;width:28px;height:1px;background:#d0d0d0"></div>
<div class="a" style="left:1654px;top:571px;width:28px;height:1px;background:#d0d0d0"></div>
<div class="a" style="left:1654px;top:598px;width:28px;height:1px;background:#d0d0d0"></div>
<div class="a" style="left:1654px;top:625px;width:28px;height:1px;background:#d0d0d0"></div>
<div class="a" style="left:1654px;top:652px;width:28px;height:1px;background:#d0d0d0"></div>
<div class="a" style="left:1654px;top:679px;width:28px;height:1px;background:#d0d0d0"></div>
<div class="a" style="left:1654px;top:706px;width:28px;height:1px;background:#d0d0d0"></div>
<div class="a" style="left:1654px;top:733px;width:28px;height:1px;background:#d0d0d0"></div>
<div class="a" style="left:1654px;top:760px;width:28px;height:1px;background:#d0d0d0"></div>
<div class="a" style="left:1654px;top:787px;width:28px;height:1px;background:#d0d0d0"></div>
<svg class="a" style="left:1659px;top:523px" width="18" height="18"><path d="M3 4 H9 M3 4 V15 H14 V9" fill="none" stroke="#111" stroke-width="1.6"/><path d="M7 11 L8 8 L14 2 L16 4 L10 10 Z" fill="#111"/></svg>
<svg class="a" style="left:1659px;top:550px" width="18" height="18"><path d="M3 3 H15 V6 M3 3 V6 M9 3 V15 M6.5 15 H11.5" fill="none" stroke="#111" stroke-width="2.2"/></svg>
<svg class="a" style="left:1659px;top:577px" width="18" height="18"><rect x="4" y="5" width="9" height="9" fill="none" stroke="#111" stroke-width="1.6"/><path d="M6 9 L8.5 11.5 L15 4" fill="none" stroke="#111" stroke-width="1.8"/></svg>
<svg class="a" style="left:1659px;top:604px" width="18" height="18"><rect x="2" y="5" width="10" height="8" fill="none" stroke="#111" stroke-width="1.3"/><path d="M3 8 H11 M3 10.5 H9" stroke="#111" stroke-width="1"/><path d="M14.5 4 V13 M12.5 11 L14.5 13.5 L16.5 11" fill="none" stroke="#111" stroke-width="1.5"/></svg>
<svg class="a" style="left:1659px;top:631px" width="18" height="18"><rect x="3" y="5" width="12" height="11" fill="none" stroke="#111" stroke-width="1.5"/><path d="M3 8 H15" stroke="#111" stroke-width="1.6"/><path d="M6 3 V6 M12 3 V6" stroke="#111" stroke-width="1.5"/><path d="M5 10.5 H13 M5 13 H13 M7.5 9 V15 M10.5 9 V15" stroke="#111" stroke-width=".8"/></svg>
<svg class="a" style="left:1659px;top:658px" width="18" height="18"><rect x="3.5" y="3.5" width="11" height="11" fill="none" stroke="#111" stroke-width="1.4"/><path d="M9 5 V10 M6.5 8 L9 10.5 L11.5 8 M6 13 H12" fill="none" stroke="#111" stroke-width="1.8"/></svg>
<svg class="a" style="left:1659px;top:686px" width="18" height="18"><rect x="2.5" y="6" width="13" height="7" rx="2" fill="none" stroke="#111" stroke-width="1.3"/><path d="M5 9.5 H13" stroke="#111" stroke-width="1" stroke-dasharray="1.2 .6"/></svg>
<svg class="a" style="left:1659px;top:713px" width="18" height="18"><rect x="3" y="3.5" width="12" height="11" fill="none" stroke="#111" stroke-width="1.4"/><path d="M5 6 H9 M3 10 H15 M3 12.5 H15" stroke="#111" stroke-width="1"/></svg>
<svg class="a" style="left:1659px;top:740px" width="18" height="18"><path d="M9 2.5 L15 5.5 V12.5 L9 15.5 L3 12.5 V5.5 Z" fill="#333"/><path d="M3 5.5 L9 8.5 L15 5.5 M9 8.5 V15.5" fill="none" stroke="#ddd" stroke-width="1"/></svg>
<svg class="a" style="left:1659px;top:770px" width="18" height="18"><rect x="3" y="3" width="12" height="13" fill="none" stroke="#111" stroke-width="1.4"/><path d="M3 6 H15" stroke="#111"/><circle cx="9" cy="11" r="3" fill="none" stroke="#111" stroke-width="1.2"/><path d="M5 9 L7 10 M13 9 L11 10" stroke="#111"/></svg>
<div class="cb" style="left:1013px;top:796px"></div>
<div class="t s11" style="left:1032px;top:794px;">Show grid lines</div>
<div class="cb" style="left:1110px;top:796px"></div>
<div class="t s11" style="left:1129px;top:794px;">Show tab-order</div>
<div class="btn" style="left:1207px;top:791px;width:17px;height:23px;line-height:19px;font-size:11px;padding-top:2px">Fit</div>
<div class="t" style="left:1012px;top:820px;font-size:8px">Screen size marker</div>
<div class="inp" style="left:1081px;top:817px;width:19px;height:12px;font-size:8.5px;line-height:10px;border-color:#bbb">758</div>
<div class="t" style="left:1100px;top:820px;font-size:8.5px">X</div>
<div class="inp" style="left:1105px;top:817px;width:20px;height:12px;font-size:8.5px;line-height:10px;border-color:#bbb">600</div>
<div class="t" style="left:1125px;top:820px;font-size:8px">SuggestedZoom</div>
<div class="inp" style="left:1184px;top:816px;width:30px;height:13px;border-color:#bbb"></div>
<div class="btn" style="left:1214px;top:815px;width:78px;height:17px;line-height:13px;font-size:8px;letter-spacing:0;padding-top:0">Set shrink zoom to fit</div>
<div class="btn" style="left:1302px;top:814px;width:150px;height:19px;line-height:17px;font-size:11px;letter-spacing:0">WebApp Prototype Edit-Mode</div>
</body></html>
